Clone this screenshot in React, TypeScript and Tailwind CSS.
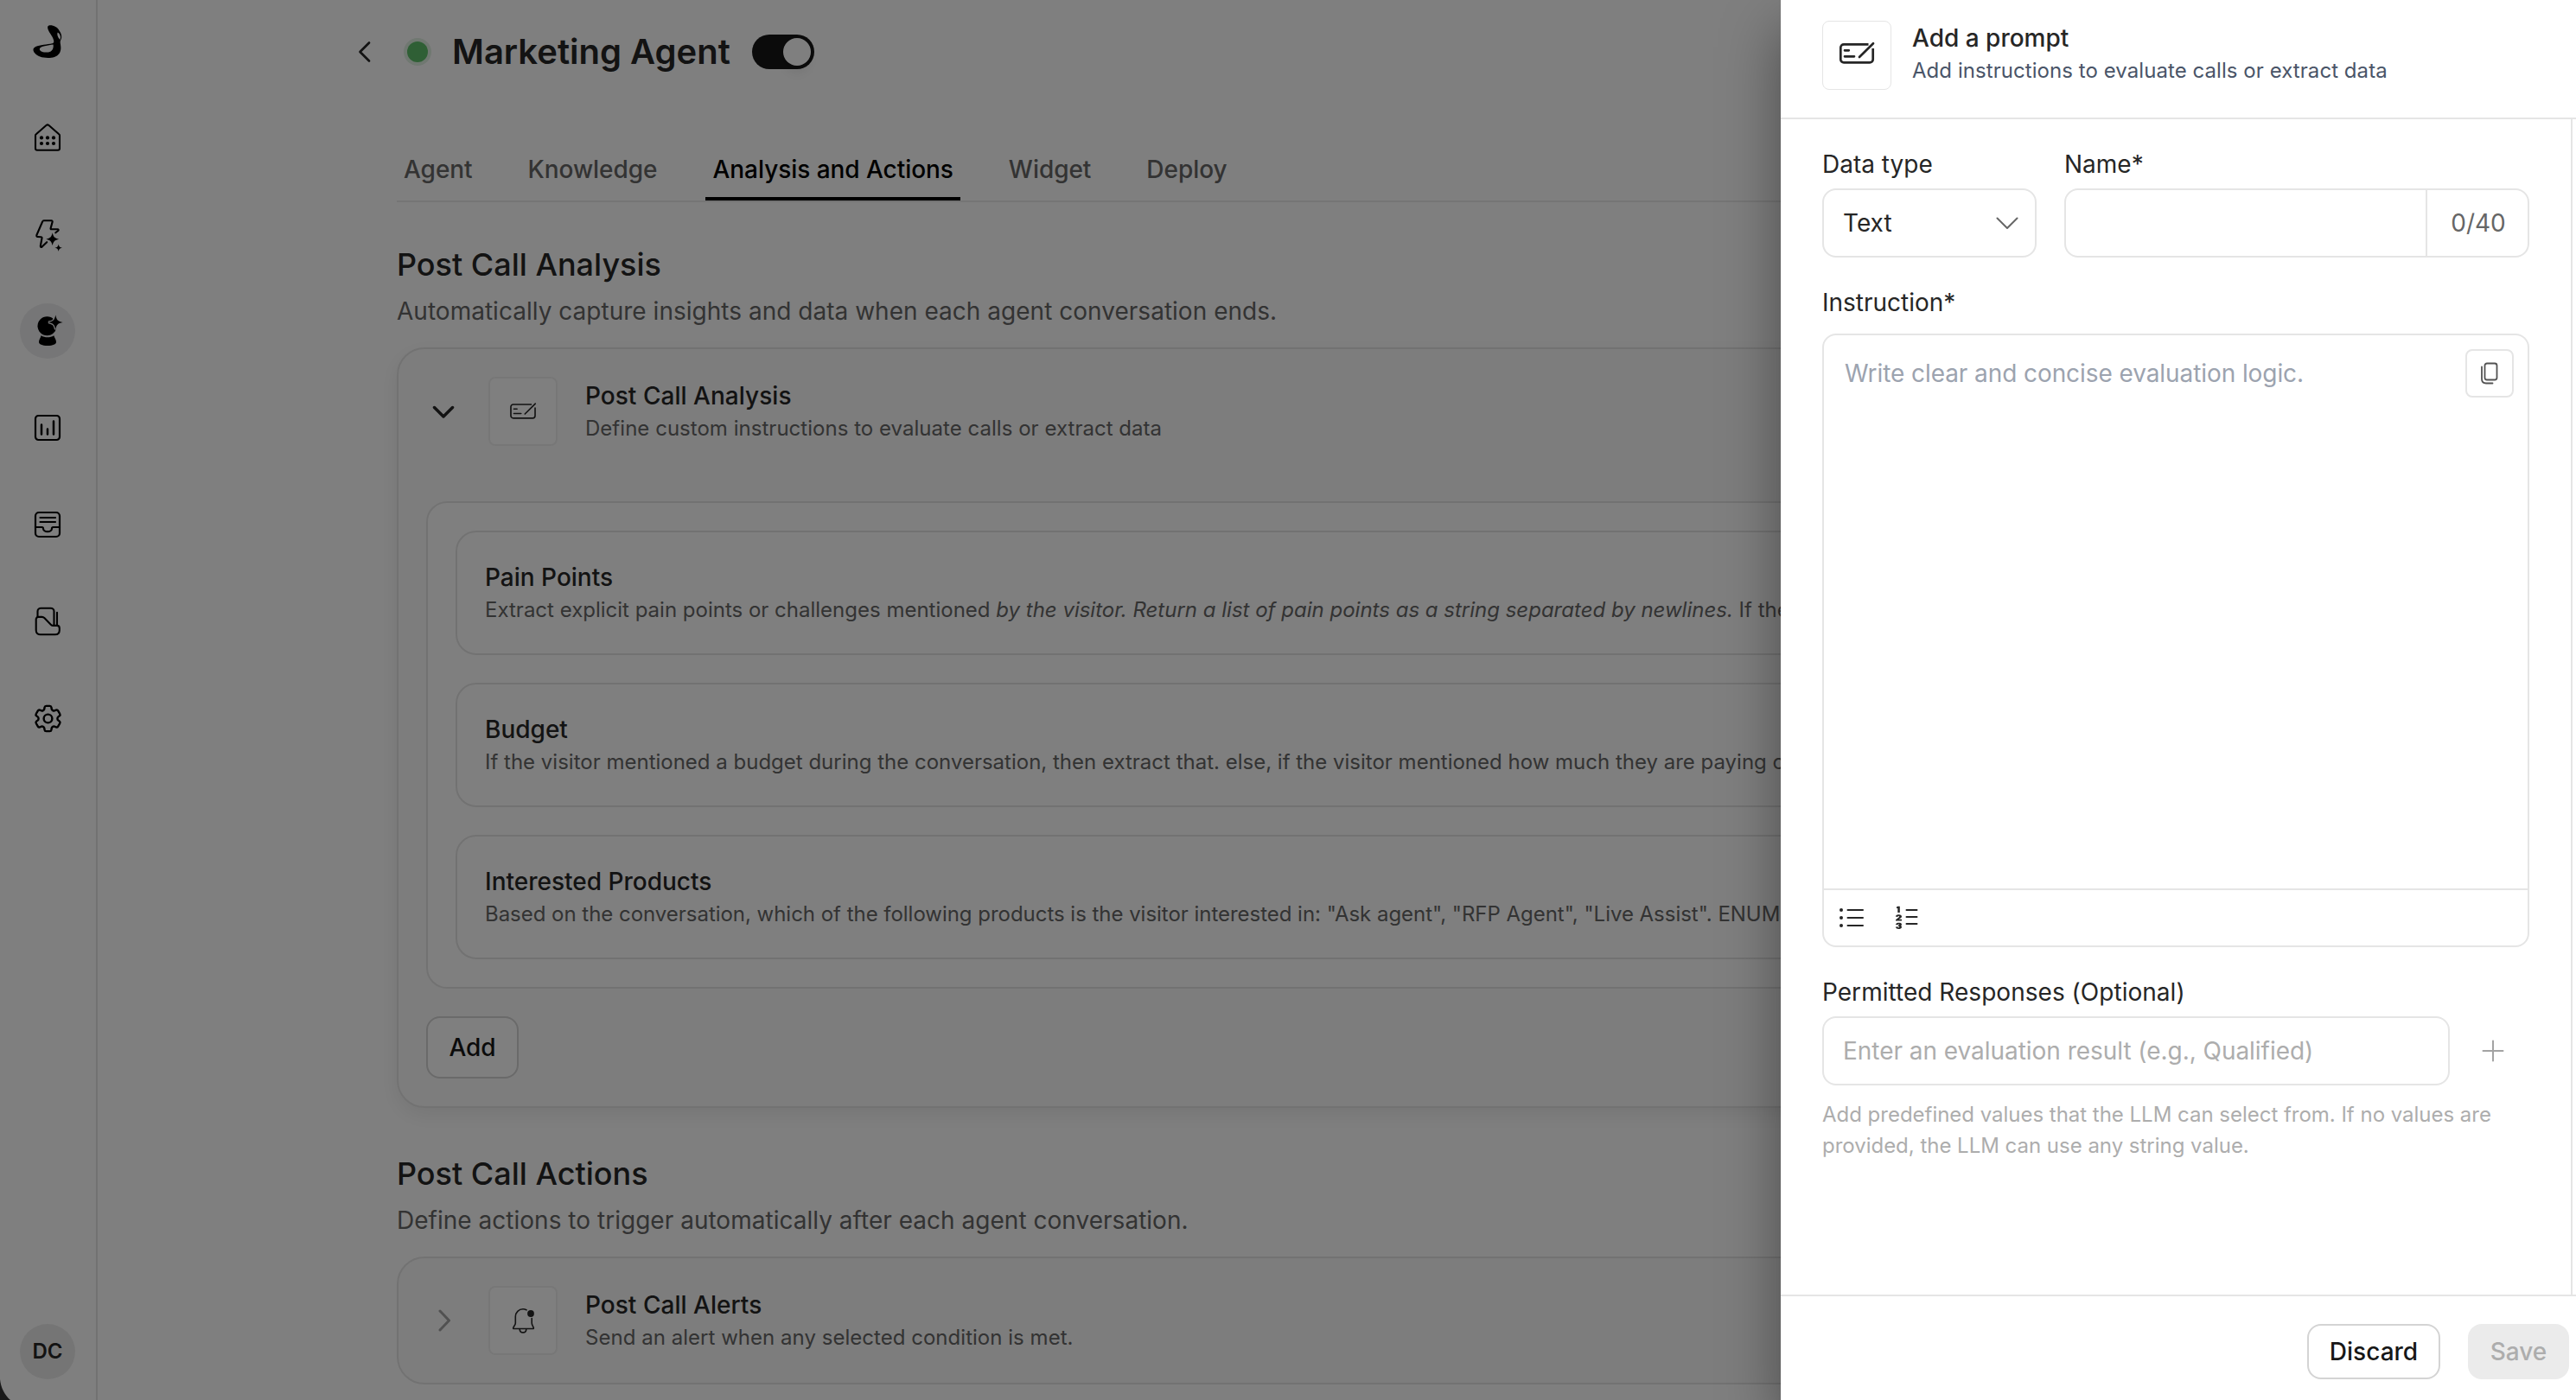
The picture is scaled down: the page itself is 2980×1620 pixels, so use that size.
import type { ReactNode } from "react";
import { HiOutlineCog6Tooth } from "react-icons/hi2";
import { VscListOrdered } from "react-icons/vsc";

const line = {
  fill: "none",
  stroke: "currentColor",
  strokeLinecap: "round" as const,
  strokeLinejoin: "round" as const,
};

function Logo() {
  return (
    <svg width="40" height="40" viewBox="0 0 40 40" fill="currentColor" fillRule="evenodd">
      <path d="M22.6.3C27.5.2 31.5 2.6 33.6 6.4c1.8 2.4 3 5.6 2.5 8.6-.5 2-1.700 3.200-1.400 5.400.5 3.600 1.700 8.400-1.200 12.600C30.600 36.800 26 38 20.500 38 13.500 38 8 36.200 5.300 32.600 2.700 29.600 2.800 26.600 6.300 25c5-2 13.200-2.400 19.200-3.700 1.800-.5 2-1.800 1.600-3.500C26.200 12.600 20.200 7.500 20.100 2.800 20.100 1.200 21 .3 22.600.3zM26.600 22.600C21 23.600 11.300 24.300 10.800 27.700c0 3.300 6.200 4.300 10.200 3.800 4.200-.7 6.300-4 5.600-8.900zM31.800 8.600c-1.200 1.900.1 6 2.500 8.300 1.700-2.500.2-6.700-2.500-8.300z" />
    </svg>
  );
}

function HomeIcon() {
  return (
    <svg width="40" height="40" viewBox="0 0 40 40" {...line} strokeWidth="2.1">
      <path d="M8 34.800H32a2 2 0 0 0 2-2V17.800c0-.7-.3-1.200-.8-1.600L21.200 5.800a2 2 0 0 0-2.400 0L6.800 16.200c-.5.4-.8.9-.8 1.600V32.800a2 2 0 0 0 2 2z" />
      {[13, 20, 27].map((x) => (
        <g key={x} fill="currentColor" stroke="none">
          <circle cx={x} cy="20.400" r="2.100" />
          <circle cx={x} cy="27" r="2.100" />
        </g>
      ))}
    </svg>
  );
}

function BoltIcon() {
  return (
    <svg width="40" height="40" viewBox="0 0 40 40" {...line} strokeWidth="2.1">
      <path d="M29.300 18.300l2.900-2.300c.8-.8.5-1.700-.6-1.700h-7.200c-.8 0-1-.5-.8-1.200l2-7.200c.3-1-.1-1.600-1.100-1.600H15.700c-.9 0-1.300.4-1.600 1.200L7.400 21c-.3 1.200.1 1.900 1.200 2l4 .3c.7 0 1 .5.9 1.200l-1.700 9.300c0 1.300.9 1.600 1.800.8l5.600-5.400" />
      <g fill="currentColor" stroke="none">
        <path d="M25.700 18.300c1.100 4.900 2.500 6.300 7.400 7.400-4.900 1.100-6.300 2.500-7.400 7.400-1.100-4.900-2.500-6.300-7.400-7.400 4.900-1.100 6.300-2.500 7.400-7.400z" />
        <path d="M32.700 31.400c.6 2.900 1.400 3.700 4.300 4.300-2.900.6-3.700 1.400-4.300 4.300-.6-2.900-1.400-3.700-4.300-4.300 2.900-.6 3.700-1.400 4.300-4.300z" />
      </g>
    </svg>
  );
}

function CrystalBallIcon() {
  return (
    <svg width="40" height="40" viewBox="0 0 40 40" fill="currentColor">
      <circle cx="19.500" cy="14.300" r="11" />
      <path
        className="stroke-[#ececee]"
        strokeWidth="2.600"
        paintOrder="stroke"
        d="M29.300 1.600c1.100 5.800 2.600 7.300 8.300 8.300-5.700 1.100-7.200 2.600-8.300 8.300-1.100-5.700-2.600-7.200-8.300-8.300 5.700-1 7.200-2.500 8.300-8.300z"
      />
      <path d="M12.600 25.200c4.200 2.700 10.500 2.700 14.700 0 .8 3 2.700 4.500 2.700 7.600 0 2.500-3.700 4.200-10 4.200s-10-1.700-10-4.200c0-3.100 1.900-4.600 2.600-7.600z" />
    </svg>
  );
}

function ChartIcon() {
  return (
    <svg width="40" height="40" viewBox="0 0 40 40" {...line} strokeWidth="2.2">
      <rect x="6" y="6" width="28" height="28" rx="3.500" />
      <path strokeWidth="2.5" d="M13 16.500v11M20 21.500v6M27 12.500v15" />
    </svg>
  );
}

function InboxIcon() {
  return (
    <svg width="40" height="40" viewBox="0 0 40 40" {...line} strokeWidth="2.2">
      <rect x="6" y="6" width="28" height="28" rx="4" />
      <path d="M11.500 12h17.500M11.500 17h17.500" />
      <path d="M6 23h7.500c1.200 0 1.500.7 1.500 1.500 0 2 2.200 3.700 5 3.700s5-1.700 5-3.700c0-.8.3-1.500 1.500-1.500H34" />
    </svg>
  );
}

function FolderIcon() {
  return (
    <svg width="40" height="40" viewBox="0 0 40 40" {...line} strokeWidth="2.1">
      <path d="M6.700 17.500a2.600 2.600 0 0 1 2.600-2.600h4.200c1.200 0 2 .4 2.800 1.200l7.500 7.600c.8.8 1.600 1.200 2.800 1.200h4.400c2 0 2.800 1 2.800 3v2.400c0 3-2 5-5 5H11.700c-3 0-5-2-5-5z" />
      <path d="M8.500 14.500V8.500a3.800 3.800 0 0 1 3.800-3.800h11.400a3.800 3.800 0 0 1 3.800 3.800V24.500M31 9.800V24.500" />
    </svg>
  );
}

function FormIcon({ className }: { className: string }) {
  return (
    <svg className={className} viewBox="0 0 40 24" {...line} overflow="visible">
      <path strokeLinecap="butt" d="M33.500 1.300H5A3.700 3.700 0 0 0 1.300 5v13.700A3.700 3.700 0 0 0 5 22.400h30a3.700 3.700 0 0 0 3.700-3.700V6" />
      <path d="M6 8.300h4.800M6 15.300h11M23 16L39 .2" />
    </svg>
  );
}

function BellIcon() {
  return (
    <svg width="30" height="32" viewBox="0 0 30 32" {...line} strokeWidth="1.6">
      <path d="M19 3.800C17.700 3.200 16.300 2.800 15 2.800a8.700 8.700 0 0 0-8.700 8.700v7.500c0 2.300-2 3.500-2.600 5.600-.1.500.1.900.6.900h22.400c.5 0 .7-.4.6-.9-.6-2.100-2.100-3.300-2.100-5.600V13.500M11.200 26c0 2.200 1.500 3.900 3.800 3.900s3.800-1.700 3.800-3.900" />
      <circle cx="24" cy="8" r="3.900" fill="currentColor" stroke="none" />
    </svg>
  );
}

function Chevron({ d, className }: { d: string; className: string }) {
  return (
    <svg className={className} width="32" height="32" viewBox="0 0 32 32" {...line}>
      <path d={d} />
    </svg>
  );
}

function NavItem({ children, active }: { children: ReactNode; active?: boolean }) {
  return (
    <a className={active ? "flex size-16 items-center justify-center rounded-full bg-[#ececee]" : "flex size-16 items-center justify-center"}>
      {children}
    </a>
  );
}

function Sidebar() {
  return (
    <aside className="flex w-[113px] shrink-0 flex-col items-center border-r-2 border-[#e5e5e5] pt-[29px] pb-6 pr-[1px] text-black">
      <Logo />
      <nav className="mt-[58px] flex flex-col gap-12">
        <NavItem><HomeIcon /></NavItem>
        <NavItem><BoltIcon /></NavItem>
        <NavItem active><CrystalBallIcon /></NavItem>
        <NavItem><ChartIcon /></NavItem>
        <NavItem><InboxIcon /></NavItem>
        <NavItem><FolderIcon /></NavItem>
        <NavItem><HiOutlineCog6Tooth className="size-[39px]" /></NavItem>
      </nav>
      <div className="mt-auto flex size-16 items-center justify-center rounded-full bg-[#ebebeb] text-2xl font-semibold text-[#262626]">DC</div>
    </aside>
  );
}

function TitleBlock({ title, children }: { title: string; children: ReactNode }) {
  return (
    <div className="min-w-0">
      <h3 className="text-[28px] leading-10 font-medium text-[#262626]">{title}</h3>
      <p className="truncate text-2xl leading-9 text-[#666]">{children}</p>
    </div>
  );
}

function SectionHeading({ title, text }: { title: string; text: string }) {
  return (
    <>
      <h2 className="text-4xl leading-[54px] font-medium text-[#262626]">{title}</h2>
      <p className="mt-[7px] mb-[22px] text-[28px] leading-10 tracking-[0.02px] text-[#666]">{text}</p>
    </>
  );
}

function IconBox({ children }: { children: ReactNode }) {
  return (
    <div className="mr-8 ml-5 flex size-20 shrink-0 items-center justify-center rounded-lg border-2 border-[#efefef] bg-white text-[#262626]">
      {children}
    </div>
  );
}

const prompts: { title: string; body: ReactNode }[] = [
  {
    title: "Pain Points",
    body: (
      <>
        Extract explicit pain points or challenges mentioned <em>by the visitor. Return a list of pain points as a string separated by newlines.</em> If the visitor did not mention any, return None.
      </>
    ),
  },
  {
    title: "Budget",
    body: "If the visitor mentioned a budget during the conversation, then extract that. else, if the visitor mentioned how much they are paying currently, extract that.",
  },
  {
    title: "Interested Products",
    body: (
      <span className="tracking-[-0.03px]">
        Based on the conversation, which of the following products is the visitor interested in: "Ask agent", "RFP Agent", "Live Assist". ENUM values only.
      </span>
    ),
  },
];

const tabs = ["Agent", "Knowledge", "Analysis and Actions", "Widget", "Deploy"];

function Main() {
  return (
    <main className="min-w-0 flex-1 pl-[346px]">
      <header className="-ml-[52px] flex h-[120px] items-center">
        <Chevron className="stroke-[2.7] text-[#262626]" d="M20 5.500L9.500 16 20 26.500" />
        <span className="ml-8 size-6 rounded-full bg-[#5ebf6a] ring-4 ring-[#e0f0e2]" />
        <h1 className="ml-7 text-[40px] font-semibold text-[#262626]">Marketing Agent</h1>
        <span className="ml-[25px] flex h-10 w-[72px] items-center justify-end rounded-full bg-[#171717] p-1">
          <span className="size-8 rounded-full bg-white shadow-lg" />
        </span>
      </header>
      <div className="mt-[42px] flex gap-12 border-b-2 border-[#eaeaea] text-[28px] font-medium tracking-[-0.05px] text-[#666]">
        {tabs.map((t) => (
          <span
            key={t}
            className={
              t === "Analysis and Actions"
                ? "h-[70px] border-b-4 border-black px-2 pt-[14px] leading-10 text-black"
                : "h-[70px] px-2 pt-[14px] leading-10"
            }
          >
            {t}
          </span>
        ))}
      </div>
      <div className="pt-[45px]">
        <SectionHeading title="Post Call Analysis" text="Automatically capture insights and data when each agent conversation ends." />
        <section className="rounded-[32px] border-2 border-[#e5e5e5] bg-[#fafafa] p-8 shadow-[0_8px_24px_rgba(0,0,0,0.08)]">
          <div className="flex items-center pl-1">
            <Chevron className="mr-4 stroke-[3.5] text-[#262626]" d="M5.500 11.500L16 22l10.500-10.500" />
            <IconBox><FormIcon className="h-[18px] w-[30px] stroke-[2.2]" /></IconBox>
            <div className="min-w-0 tracking-[0.03px]">
              <TitleBlock title="Post Call Analysis">Define custom instructions to evaluate calls or extract data</TitleBlock>
            </div>
          </div>
          <div className="mt-16 flex flex-col gap-8 rounded-3xl border-2 border-[#e5e5e5] bg-white p-8">
            {prompts.map((p) => (
              <div key={p.title} className="rounded-3xl border-2 border-[#e5e5e5] p-8">
                <TitleBlock title={p.title}>{p.body}</TitleBlock>
              </div>
            ))}
          </div>
          <button className="mt-8 flex h-[72px] w-[107px] items-center justify-center rounded-2xl border-2 border-[#d4d4d4] bg-white text-[28px] font-medium text-[#171717]">Add</button>
        </section>
      </div>
      <div className="pt-[49px]">
        <SectionHeading title="Post Call Actions" text="Define actions to trigger automatically after each agent conversation." />
        <section className="flex items-center rounded-[32px] border-2 border-[#e5e5e5] bg-[#fafafa] p-8 pl-9">
          <Chevron className="mr-4 stroke-[3] text-[#a3a3a3]" d="M12 5l10.500 11L12 27" />
          <IconBox><BellIcon /></IconBox>
          <div className="min-w-0 tracking-[0.03px]">
            <TitleBlock title="Post Call Alerts">Send an alert when any selected condition is met.</TitleBlock>
          </div>
        </section>
      </div>
    </main>
  );
}

function CopyIcon() {
  return (
    <svg width="24" height="28" viewBox="0 0 24 28" {...line} strokeWidth="1.8">
      <rect x="6.500" y="2.500" width="14" height="19" rx="2.500" />
      <path d="M3 6.500v14c0 3.300 1.700 5 5 5h7.500" />
    </svg>
  );
}

function BulletListIcon() {
  return (
    <svg width="28" height="28" viewBox="0 0 28 28" {...line} strokeWidth="2">
      <path d="M9.500 5h17.500M9.500 14h17.500M9.500 23h17.500" />
      {[5, 14, 23].map((y) => (
        <circle key={y} cx="2" cy={y} r="2" fill="currentColor" stroke="none" />
      ))}
    </svg>
  );
}

function NumberListIcon() {
  return (
    <span className="flex h-7 gap-[3px]">
      <span className="w-2 overflow-hidden">
        <VscListOrdered preserveAspectRatio="none" className="-mt-1 -ml-[7px] h-[38px] w-14 max-w-none" />
      </span>
      <svg width="15" height="28" viewBox="0 0 15 28" {...line} strokeWidth="2">
        <path d="M1.500 5h12M1.500 13h12M1.500 21h12" />
      </svg>
    </span>
  );
}

function PromptPanel() {
  return (
    <div role="dialog" className="absolute inset-y-0 right-0 flex w-[920px] flex-col bg-white text-[28px] leading-10 text-[#262626] shadow-[0_32px_64px_rgba(0,0,0,0.4)]">
      <header className="flex h-[138px] shrink-0 gap-6 border-b-2 border-[#e5e5e5] px-12 pt-6">
        <div className="flex size-20 items-center justify-center rounded-lg border border-[#e5e5e5] pb-1">
          <FormIcon className="h-6 w-10 stroke-[2.7]" />
        </div>
        <div>
          <h2 className="font-medium">Add a prompt</h2>
          <p className="text-2xl leading-9 tracking-[0.06px] text-[#4a5568]">Add instructions to evaluate calls or extract data</p>
        </div>
      </header>
      <div className="flex flex-1 pr-1">
        <div className="flex-1 border-r-2 border-[#e5e5e5] pt-8 pr-12 pl-12">
          <div className="flex gap-8">
            <label className="w-[248px]">
              Data type
              <span className="mt-2 flex h-20 items-center justify-between rounded-2xl border-2 border-[#e5e5e5] pr-4 pl-[22px]">
                Text
                <Chevron className="stroke-[2] text-[#666]" d="M4.500 10.500L16 22l11.500-11.500" />
              </span>
            </label>
            <label className="flex-1">
              Name*
              <span className="mt-2 flex h-20 justify-end rounded-2xl border-2 border-[#e5e5e5]">
                <span className="flex w-[118px] items-center justify-center border-l-2 border-[#e5e5e5] pl-[2px] text-[#666]">0/40</span>
              </span>
            </label>
          </div>
          <div className="mt-8">Instruction*</div>
          <div className="mt-4 flex h-[710px] flex-col rounded-2xl border-2 border-[#e5e5e5]">
            <div className="flex flex-1 items-start justify-between pt-4 pr-4 pl-6">
              <span className="mt-2 tracking-[-0.08px] text-[#9ca3af]">Write clear and concise evaluation logic.</span>
              <button className="flex size-14 items-center justify-center rounded-lg border-2 border-[#e5e5e5] text-[#525252]">
                <CopyIcon />
              </button>
            </div>
            <div className="flex h-[66px] items-center gap-[37px] border-t-2 border-[#e5e5e5] pl-[18px]">
              <BulletListIcon />
              <NumberListIcon />
            </div>
          </div>
          <div className="mt-8 tracking-[0.03px]">Permitted Responses (Optional)</div>
          <div className="mt-2 flex items-center">
            <div className="flex h-20 w-[726px] items-center rounded-2xl border-2 border-[#e5e5e5] pl-[22px] tracking-[-0.04px] text-[#adadad]">Enter an evaluation result (e.g., Qualified)</div>
            <svg className="ml-[34px] text-[#a3a3a3]" width="32" height="32" viewBox="0 0 32 32" {...line} strokeWidth="2">
              <path d="M16 4.500v23M4.500 16h23" />
            </svg>
          </div>
          <p className="mt-4 text-2xl leading-9 tracking-[-0.02px] text-[#adadad]">Add predefined values that the LLM can select from. If no values are provided, the LLM can use any string value.</p>
        </div>
      </div>
      <footer className="flex h-[122px] shrink-0 justify-end gap-8 border-t-2 border-[#e5e5e5] pt-8 pr-2 font-medium">
        <button className="h-16 w-[154px] rounded-2xl border-2 border-[#d4d4d4] text-[#171717]">Discard</button>
        <button className="h-16 w-[117px] rounded-2xl bg-[#ebebeb] text-[#adadad]">Save</button>
      </footer>
    </div>
  );
}

export default function App() {
  return (
    <div className="relative flex h-[1620px] w-[2980px] overflow-hidden bg-white font-['Inter',sans-serif]">
      <Sidebar />
      <Main />
      <div className="absolute inset-0 bg-black/50" />
      <svg className="absolute bottom-0 left-0" width="14" height="24" viewBox="0 0 14 24">
        <path fill="#1a1a1a" d="M0 0c1 9.500 5 18 12 24H0z" />
      </svg>
      <PromptPanel />
    </div>
  );
}
